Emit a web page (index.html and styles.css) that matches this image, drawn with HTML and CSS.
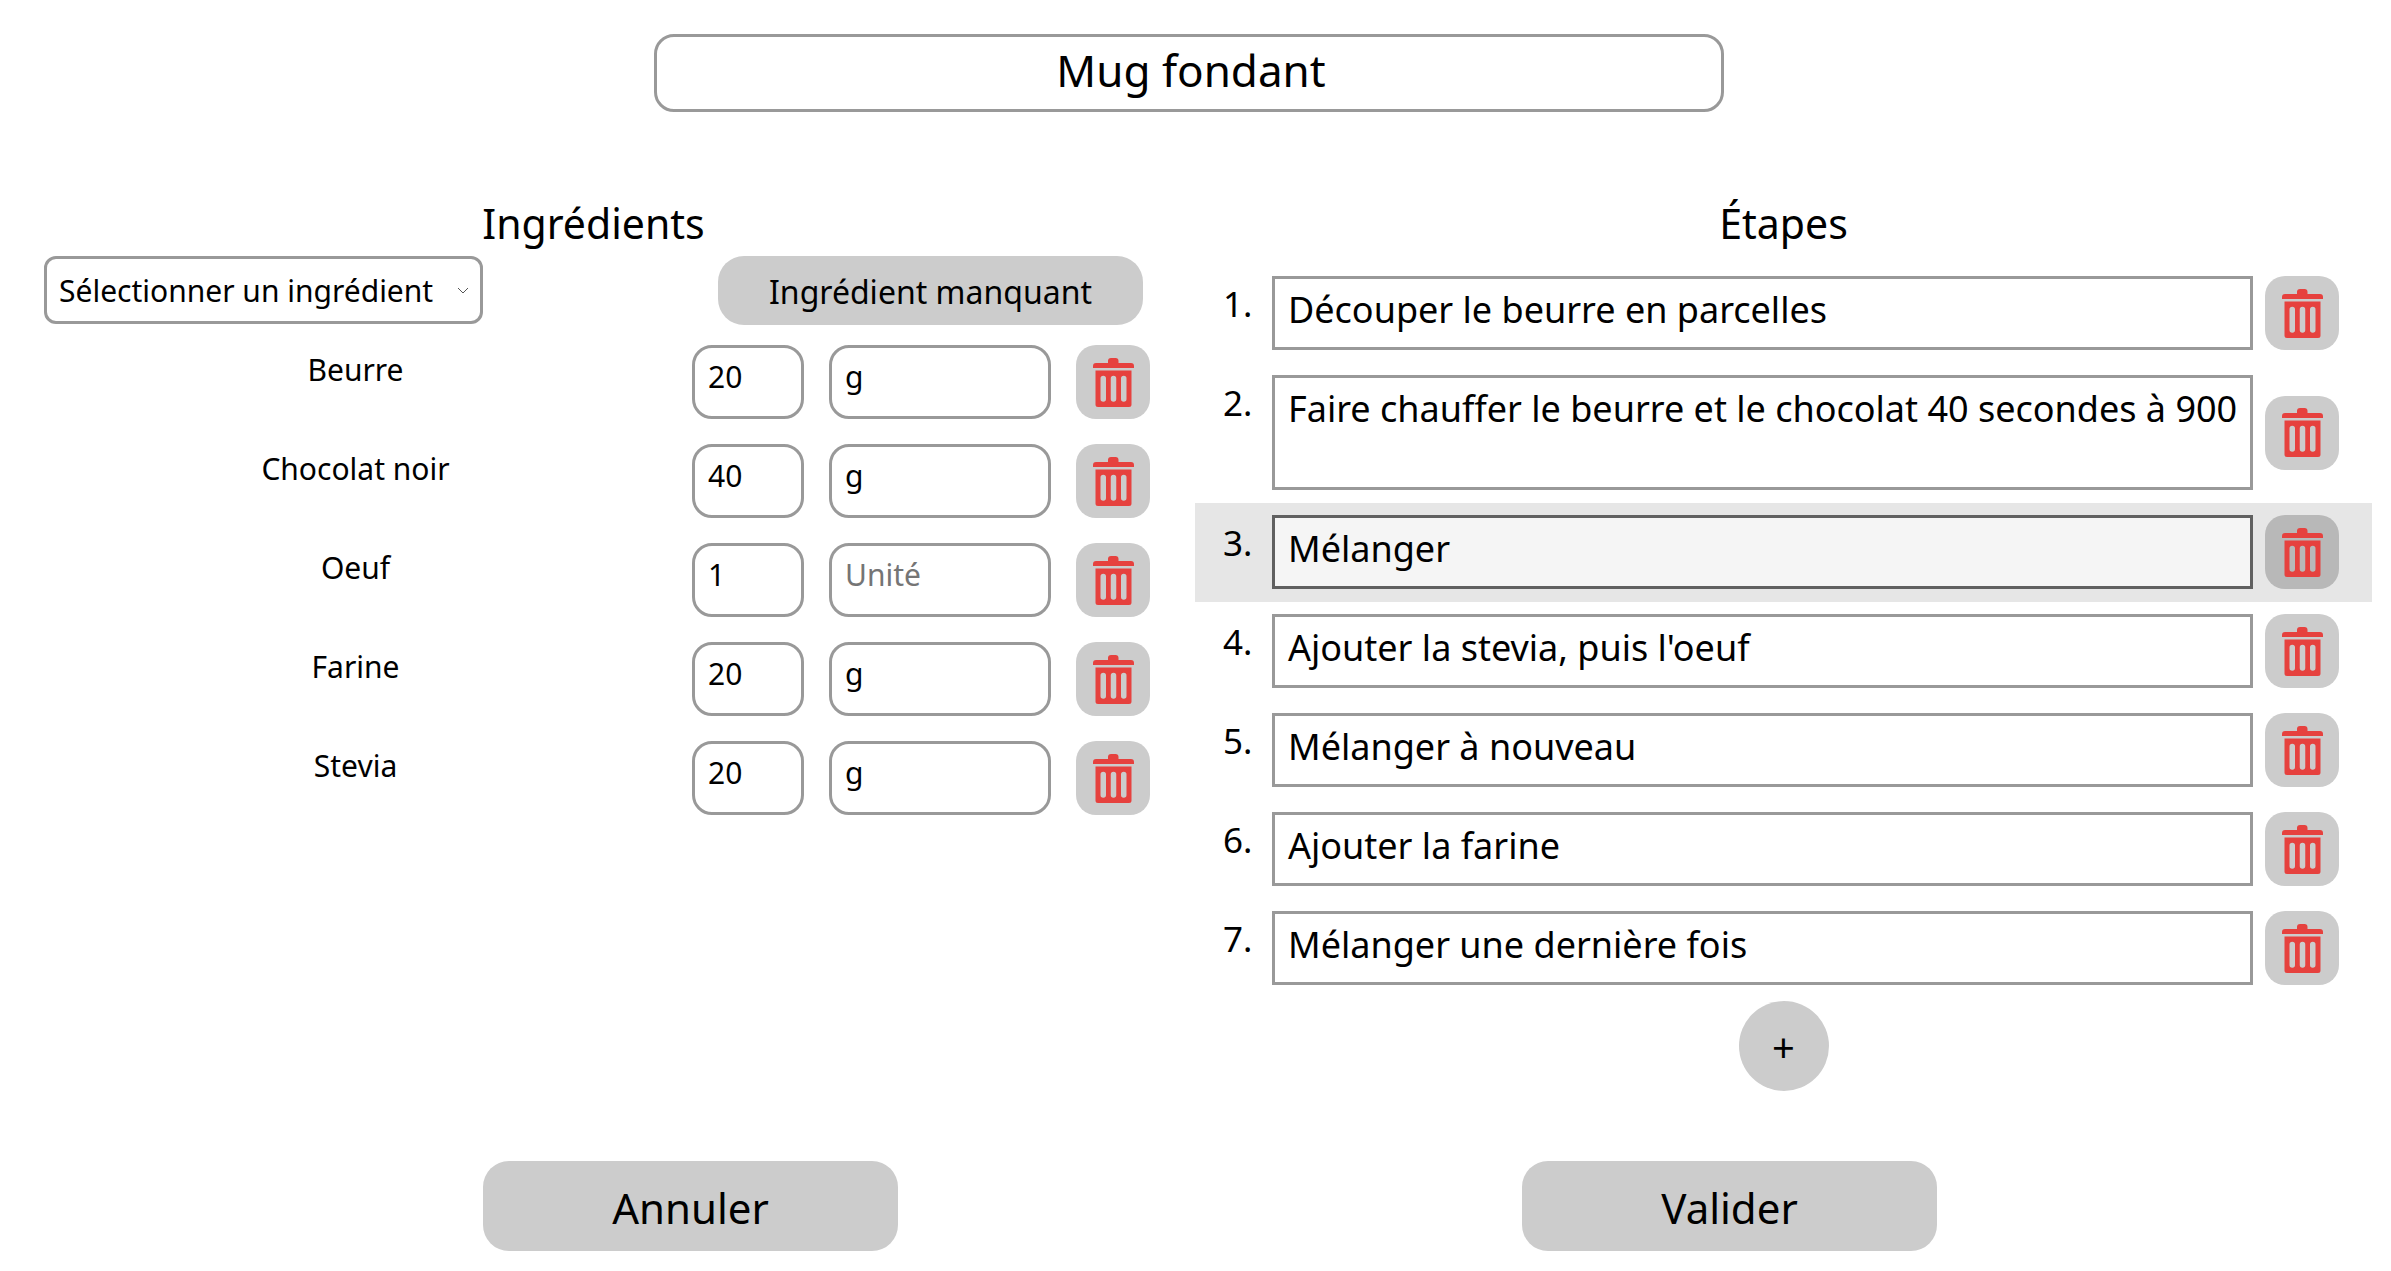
FILE: index.html
```
<!DOCTYPE html>
<html lang="fr">
<head>
<meta charset="utf-8">
<meta name="viewport" content="width=device-width, initial-scale=1">
<title>Mug fondant</title>
<link rel="stylesheet" href="styles.css">
</head>
<body>
<svg class="sprite" aria-hidden="true">
  <symbol id="trash" viewBox="0 0 41 49">
    <path d="M15 5V3Q15 0 18 0H22.500Q25.500 0 25.500 3V5H38Q41 5 41 8V10H0V8Q0 5 3 5Z"/>
    <path fill-rule="evenodd" d="M2.500 12.500H38.500V46.500Q38.500 49 36 49H5Q2.500 49 2.500 46.500ZM7.500 20.500V41a2.750 2.750 0 0 0 5.500 0V20.500a2.750 2.750 0 0 0-5.500 0ZM17.750 20.500V41a2.750 2.750 0 0 0 5.500 0V20.500a2.750 2.750 0 0 0-5.500 0ZM28 20.500V41a2.750 2.750 0 0 0 5.500 0V20.500a2.750 2.750 0 0 0-5.500 0Z"/>
  </symbol>
</svg>
<form class="recipe">
  <input class="recipe-name" type="text" value="Mug fondant" aria-label="Nom de la recette">

  <div class="columns">
    <section class="ingredients">
      <h2 class="heading">Ingrédients</h2>
      <div class="toolbar">
        <div class="picker">
          <select class="picker-select" aria-label="Ingrédient">
            <option>Sélectionner un ingrédient</option>
          </select>
          <svg class="picker-arrow" viewBox="0 0 12 7" aria-hidden="true"><path d="M1 1l5 5 5-5"/></svg>
        </div>
        <button class="button missing" type="button">Ingrédient manquant</button>
      </div>
      <ul class="ingredient-list">
        <li class="ingredient">
          <label class="ingredient-name" for="q1">Beurre</label>
          <input class="field quantity" id="q1" type="text" value="20">
          <input class="field unit" type="text" value="g" placeholder="Unité" aria-label="Unité">
          <button class="button delete" type="button" aria-label="Supprimer"><svg class="icon"><use href="#trash"/></svg></button>
        </li>
        <li class="ingredient">
          <label class="ingredient-name" for="q2">Chocolat noir</label>
          <input class="field quantity" id="q2" type="text" value="40">
          <input class="field unit" type="text" value="g" placeholder="Unité" aria-label="Unité">
          <button class="button delete" type="button" aria-label="Supprimer"><svg class="icon"><use href="#trash"/></svg></button>
        </li>
        <li class="ingredient">
          <label class="ingredient-name" for="q3">Oeuf</label>
          <input class="field quantity" id="q3" type="text" value="1">
          <input class="field unit" type="text" placeholder="Unité" aria-label="Unité">
          <button class="button delete" type="button" aria-label="Supprimer"><svg class="icon"><use href="#trash"/></svg></button>
        </li>
        <li class="ingredient">
          <label class="ingredient-name" for="q4">Farine</label>
          <input class="field quantity" id="q4" type="text" value="20">
          <input class="field unit" type="text" value="g" placeholder="Unité" aria-label="Unité">
          <button class="button delete" type="button" aria-label="Supprimer"><svg class="icon"><use href="#trash"/></svg></button>
        </li>
        <li class="ingredient">
          <label class="ingredient-name" for="q5">Stevia</label>
          <input class="field quantity" id="q5" type="text" value="20">
          <input class="field unit" type="text" value="g" placeholder="Unité" aria-label="Unité">
          <button class="button delete" type="button" aria-label="Supprimer"><svg class="icon"><use href="#trash"/></svg></button>
        </li>
      </ul>
    </section>

    <section class="steps">
      <h2 class="heading">Étapes</h2>
      <ol class="step-list">
        <li class="step">
          <label class="step-number" for="s1">1.</label>
          <textarea class="step-text" id="s1" rows="1">Découper le beurre en parcelles</textarea>
          <button class="button delete" type="button" aria-label="Supprimer"><svg class="icon"><use href="#trash"/></svg></button>
        </li>
        <li class="step">
          <label class="step-number" for="s2">2.</label>
          <textarea class="step-text" id="s2" rows="2">Faire chauffer le beurre et le chocolat 40 secondes à 900</textarea>
          <button class="button delete" type="button" aria-label="Supprimer"><svg class="icon"><use href="#trash"/></svg></button>
        </li>
        <li class="step active">
          <label class="step-number" for="s3">3.</label>
          <textarea class="step-text" id="s3" rows="1">Mélanger</textarea>
          <button class="button delete" type="button" aria-label="Supprimer"><svg class="icon"><use href="#trash"/></svg></button>
        </li>
        <li class="step">
          <label class="step-number" for="s4">4.</label>
          <textarea class="step-text" id="s4" rows="1">Ajouter la stevia, puis l'oeuf</textarea>
          <button class="button delete" type="button" aria-label="Supprimer"><svg class="icon"><use href="#trash"/></svg></button>
        </li>
        <li class="step">
          <label class="step-number" for="s5">5.</label>
          <textarea class="step-text" id="s5" rows="1">Mélanger à nouveau</textarea>
          <button class="button delete" type="button" aria-label="Supprimer"><svg class="icon"><use href="#trash"/></svg></button>
        </li>
        <li class="step">
          <label class="step-number" for="s6">6.</label>
          <textarea class="step-text" id="s6" rows="1">Ajouter la farine</textarea>
          <button class="button delete" type="button" aria-label="Supprimer"><svg class="icon"><use href="#trash"/></svg></button>
        </li>
        <li class="step">
          <label class="step-number" for="s7">7.</label>
          <textarea class="step-text" id="s7" rows="1">Mélanger une dernière fois</textarea>
          <button class="button delete" type="button" aria-label="Supprimer"><svg class="icon"><use href="#trash"/></svg></button>
        </li>
      </ol>
      <button class="button add" type="button" aria-label="Ajouter une étape">+</button>
    </section>
  </div>

  <div class="actions">
    <button class="button action" type="button">Annuler</button>
    <button class="button action" type="submit">Valider</button>
  </div>
</form>
</body>
</html>
```
FILE: styles.css
```
* {
  box-sizing: border-box;
}

body {
  margin: 0;
  background: #fff;
  color: #000;
  font-family: "Segoe UI", "Noto Sans", sans-serif;
}

input,
select,
textarea,
button {
  margin: 0;
  color: inherit;
  font-family: inherit;
}

.sprite {
  display: none;
}

.recipe {
  display: flex;
  flex-direction: column;
  padding: 34px 19px 20px 18px;
}

.recipe-name {
  align-self: center;
  width: 1070px;
  max-width: 100%;
  height: 78px;
  margin-right: 12px;
  padding: 0 10px 6px 14px;
  border: 3px solid #999;
  border-radius: 20px;
  background: #fff;
  font-size: 44px;
  text-align: center;
}

.columns {
  display: grid;
  grid-template-columns: 1fr 1fr;
  margin-top: 80px;
}

.heading {
  margin: 0;
  font-size: 41px;
  font-weight: 400;
  line-height: 62px;
  text-align: center;
}

.button {
  display: flex;
  align-items: center;
  justify-content: center;
  padding: 0;
  border: 0;
  border-radius: 26px;
  background: #ccc;
}

/* Ingredients */

.ingredients {
  padding: 0 45px 0 26px;
}

.ingredients .heading,
.toolbar {
  padding-right: 7px;
}

.toolbar {
  display: flex;
  justify-content: space-between;
  margin-top: 2px;
}

.picker {
  position: relative;
  width: 439px;
}

.picker-select {
  width: 100%;
  height: 68px;
  padding: 0 12px;
  border: 3px solid #999;
  border-radius: 12px;
  background: #fff;
  font-size: 30px;
  appearance: none;
}

.picker-arrow {
  position: absolute;
  top: 31px;
  right: 14px;
  width: 12px;
  height: 7px;
  fill: none;
  stroke: #555;
  pointer-events: none;
}

.missing {
  width: 425px;
  height: 69px;
  padding-top: 2px;
  font-size: 32px;
}

.ingredient-list,
.step-list {
  margin: 0;
  padding: 0;
  list-style: none;
}

.ingredient-list {
  display: grid;
  gap: 25px;
  margin-top: 20px;
}

.ingredient {
  display: flex;
  align-items: flex-start;
  gap: 25px;
}

.ingredient-name {
  flex: 1;
  font-size: 30px;
  line-height: 50px;
  text-align: center;
}

.field {
  height: 74px;
  padding: 0 13px 12px;
  border: 3px solid #999;
  border-radius: 20px;
  background: #fff;
  font-size: 30px;
}

.field::placeholder {
  color: #757575;
}

.quantity {
  width: 112px;
}

.unit {
  width: 222px;
}

.delete {
  flex: none;
  width: 74px;
  height: 74px;
  border-radius: 20px;
}

.icon {
  width: 41px;
  height: 49px;
  fill: #e6413e;
}

/* Steps */

.steps {
  display: flex;
  flex-direction: column;
}

.step-list {
  margin-top: 10px;
}

.step {
  display: flex;
  align-items: center;
  gap: 12px;
  padding: 12px 33px 13px 28px;
}

.step-number {
  align-self: flex-start;
  width: 37px;
  font-size: 35px;
  line-height: 56px;
}

.step-text {
  flex: 1;
  min-width: 0;
  padding: 10px 4px 17px 13px;
  border: 3px solid #999;
  border-radius: 0;
  background: #fff;
  font-size: 36px;
  line-height: 41px;
  overflow: hidden;
  resize: none;
}

.active {
  background: #e6e6e6;
}

.active .step-text {
  border-color: #606060;
  background: #f5f5f5;
}

.active .delete {
  background: #b8b8b8;
}

.add {
  align-self: center;
  width: 90px;
  height: 90px;
  margin-top: 3px;
  border-radius: 50%;
  font-size: 40px;
}

/* Form actions */

.actions {
  display: flex;
  justify-content: space-between;
  margin-top: 70px;
  padding: 0 435px 0 465px;
}

.action {
  width: 415px;
  height: 90px;
  padding-top: 2px;
  font-size: 42px;
}
```
